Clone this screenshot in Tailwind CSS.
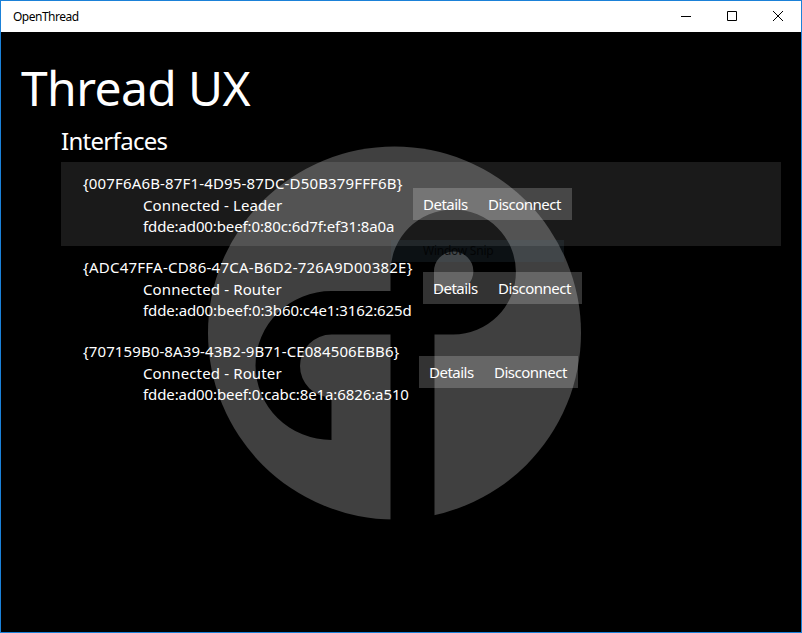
<!DOCTYPE html>
<html lang="en">
<head>
<meta charset="utf-8">
<title>OpenThread</title>
<script src="https://cdn.jsdelivr.net/npm/@tailwindcss/browser@4"></script>
</head>
<body class="bg-black">
<div class="relative w-[802px] h-[633px] border border-[#1b81d8] bg-black flex flex-col overflow-hidden font-['Segoe_UI','Noto_Sans',sans-serif] text-white">
  <svg class="absolute left-[-1px] top-[-1px]" width="802" height="633" viewBox="0 0 802 633">
    <circle cx="394.500" cy="333" r="186.500" fill="#404040"/>
    <path fill="#000" fill-rule="evenodd" d="M390.500 530V334.500H331.500A31.500 31.500 0 0 0 331.500 397.500V440A76 74.500 0 0 1 331.500 291H390.500V272A62.700 62.500 0 1 1 453 334.500H434.500V530ZM434 291V272A19.700 19.700 0 1 1 453.500 291Z"/>
  </svg>

  <header class="relative flex h-[31px] shrink-0 items-center bg-white pl-3 text-black">
    <span class="text-[12px] leading-4 tracking-[-0.5px]">OpenThread</span>
    <div class="ml-auto flex">
      <svg width="46" height="31" fill="none" stroke="#000"><path d="M18 15.500h10"/></svg>
      <svg width="46" height="31" fill="none" stroke="#000"><path d="M18.500 10.500h9v9h-9z"/></svg>
      <svg width="46" height="31" fill="none" stroke="#000"><path d="M18 10l10 10M28 10l-10 10"/></svg>
    </div>
  </header>

  <main class="relative pl-[20px] pr-5">
    <h1 class="mt-[23px] h-[66px] text-[48px] leading-[66px] tracking-[-0.6px] whitespace-nowrap">Thread UX</h1>
    <h2 class="ml-10 mt-[3px] h-[38px] text-[24px] leading-[34px] tracking-[-0.7px] whitespace-nowrap">Interfaces</h2>
    <ul class="ml-[40px] text-[15px] whitespace-nowrap">
      <li class="flex h-[84px] items-start bg-white/10 pl-[22px] pt-[10px]">
        <div class="w-[330px]">
          <p class="leading-[22px] tracking-[0.15px]">{007F6A6B-87F1-4D95-87DC-D50B379FFF6B}</p>
          <p class="pl-[60px] leading-[22px] tracking-[0.12px]">Connected - Leader</p>
          <p class="pl-[60px] leading-[21px] tracking-[-0.12px]">fdde:ad00:beef:0:80c:6d7f:ef31:8a0a</p>
        </div>
        <div class="mt-4 flex h-8 w-[159px] bg-white/20 leading-8 tracking-[-0.5px]">
          <button class="w-[65px] pl-[10px] text-left">Details</button>
          <button class="pl-[10px] text-left">Disconnect</button>
        </div>
      </li>
      <li class="flex h-[84px] items-start pl-[22px] pt-[10px]">
        <div class="w-[340px]">
          <p class="leading-[22px] tracking-[0.24px]">{ADC47FFA-CD86-47CA-B6D2-726A9D00382E}</p>
          <p class="pl-[60px] leading-[22px] tracking-[0.14px]">Connected - Router</p>
          <p class="pl-[60px] leading-[21px] tracking-[-0.09px]">fdde:ad00:beef:0:3b60:c4e1:3162:625d</p>
        </div>
        <div class="mt-4 flex h-8 w-[159px] bg-white/20 leading-8 tracking-[-0.5px]">
          <button class="w-[65px] pl-[10px] text-left">Details</button>
          <button class="pl-[10px] text-left">Disconnect</button>
        </div>
      </li>
      <li class="flex h-[84px] items-start pl-[22px] pt-[10px]">
        <div class="w-[336px]">
          <p class="leading-[22px] tracking-[0.1px]">{707159B0-8A39-43B2-9B71-CE084506EBB6}</p>
          <p class="pl-[60px] leading-[22px] tracking-[0.14px]">Connected - Router</p>
          <p class="pl-[60px] leading-[21px] tracking-[-0.1px]">fdde:ad00:beef:0:cabc:8e1a:6826:a510</p>
        </div>
        <div class="mt-4 flex h-8 w-[159px] bg-white/20 leading-8 tracking-[-0.5px]">
          <button class="w-[65px] pl-[10px] text-left">Details</button>
          <button class="pl-[10px] text-left">Disconnect</button>
        </div>
      </li>
    </ul>
  </main>

  <!-- fading menu entry floating over the list -->
  <div class="absolute left-[390px] top-[239px] h-[22px] w-[173px] bg-[#466478]/17 pl-8 text-[12px] leading-[22px] tracking-[-0.25px] text-black/75">Window Snip</div>
</div>
</body>
</html>
